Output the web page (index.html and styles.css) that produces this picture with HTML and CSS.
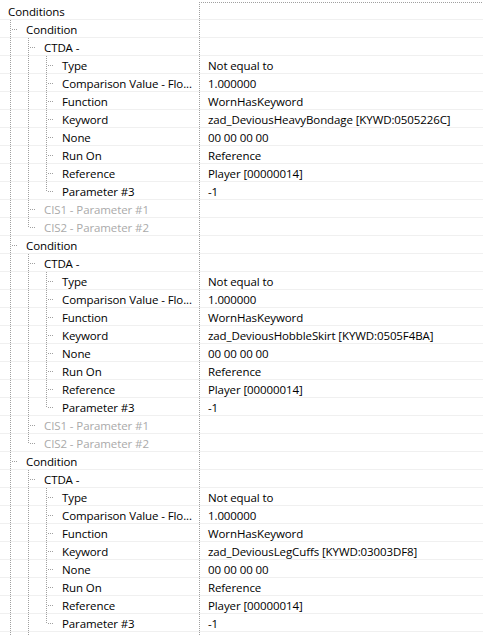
FILE: index.html
```html
<!DOCTYPE html>
<html>
<head>
<meta charset="utf-8">
<link rel="stylesheet" href="styles.css">
</head>
<body>
<div class="tree">
  <div class="row first"><div class="name"><span class="label">Conditions</span></div><div class="val"></div></div>

  <div class="row"><div class="name"><span class="g t"></span><span class="label">Condition</span></div><div class="val"></div></div>
  <div class="row"><div class="name"><span class="g v"></span><span class="g t"></span><span class="label">CTDA -</span></div><div class="val"></div></div>
  <div class="row"><div class="name"><span class="g v"></span><span class="g v"></span><span class="g t"></span><span class="label">Type</span></div><div class="val">Not equal to</div></div>
  <div class="row"><div class="name"><span class="g v"></span><span class="g v"></span><span class="g t"></span><span class="label">Comparison Value - Flo...</span></div><div class="val">1.000000</div></div>
  <div class="row"><div class="name"><span class="g v"></span><span class="g v"></span><span class="g t"></span><span class="label">Function</span></div><div class="val">WornHasKeyword</div></div>
  <div class="row"><div class="name"><span class="g v"></span><span class="g v"></span><span class="g t"></span><span class="label">Keyword</span></div><div class="val">zad_DeviousHeavyBondage [KYWD:0505226C]</div></div>
  <div class="row"><div class="name"><span class="g v"></span><span class="g v"></span><span class="g t"></span><span class="label">None</span></div><div class="val">00 00 00 00</div></div>
  <div class="row"><div class="name"><span class="g v"></span><span class="g v"></span><span class="g t"></span><span class="label">Run On</span></div><div class="val">Reference</div></div>
  <div class="row"><div class="name"><span class="g v"></span><span class="g v"></span><span class="g t"></span><span class="label">Reference</span></div><div class="val">Player [00000014]</div></div>
  <div class="row"><div class="name"><span class="g v"></span><span class="g v"></span><span class="g l"></span><span class="label">Parameter #3</span></div><div class="val">-1</div></div>
  <div class="row dim"><div class="name"><span class="g v"></span><span class="g t"></span><span class="label">CIS1 - Parameter #1</span></div><div class="val"></div></div>
  <div class="row dim"><div class="name"><span class="g v"></span><span class="g l"></span><span class="label">CIS2 - Parameter #2</span></div><div class="val"></div></div>

  <div class="row"><div class="name"><span class="g t"></span><span class="label">Condition</span></div><div class="val"></div></div>
  <div class="row"><div class="name"><span class="g v"></span><span class="g t"></span><span class="label">CTDA -</span></div><div class="val"></div></div>
  <div class="row"><div class="name"><span class="g v"></span><span class="g v"></span><span class="g t"></span><span class="label">Type</span></div><div class="val">Not equal to</div></div>
  <div class="row"><div class="name"><span class="g v"></span><span class="g v"></span><span class="g t"></span><span class="label">Comparison Value - Flo...</span></div><div class="val">1.000000</div></div>
  <div class="row"><div class="name"><span class="g v"></span><span class="g v"></span><span class="g t"></span><span class="label">Function</span></div><div class="val">WornHasKeyword</div></div>
  <div class="row"><div class="name"><span class="g v"></span><span class="g v"></span><span class="g t"></span><span class="label">Keyword</span></div><div class="val">zad_DeviousHobbleSkirt [KYWD:0505F4BA]</div></div>
  <div class="row"><div class="name"><span class="g v"></span><span class="g v"></span><span class="g t"></span><span class="label">None</span></div><div class="val">00 00 00 00</div></div>
  <div class="row"><div class="name"><span class="g v"></span><span class="g v"></span><span class="g t"></span><span class="label">Run On</span></div><div class="val">Reference</div></div>
  <div class="row"><div class="name"><span class="g v"></span><span class="g v"></span><span class="g t"></span><span class="label">Reference</span></div><div class="val">Player [00000014]</div></div>
  <div class="row"><div class="name"><span class="g v"></span><span class="g v"></span><span class="g l"></span><span class="label">Parameter #3</span></div><div class="val">-1</div></div>
  <div class="row dim"><div class="name"><span class="g v"></span><span class="g t"></span><span class="label">CIS1 - Parameter #1</span></div><div class="val"></div></div>
  <div class="row dim"><div class="name"><span class="g v"></span><span class="g l"></span><span class="label">CIS2 - Parameter #2</span></div><div class="val"></div></div>

  <div class="row"><div class="name"><span class="g t"></span><span class="label">Condition</span></div><div class="val"></div></div>
  <div class="row"><div class="name"><span class="g v"></span><span class="g t"></span><span class="label">CTDA -</span></div><div class="val"></div></div>
  <div class="row"><div class="name"><span class="g v"></span><span class="g v"></span><span class="g t"></span><span class="label">Type</span></div><div class="val">Not equal to</div></div>
  <div class="row"><div class="name"><span class="g v"></span><span class="g v"></span><span class="g t"></span><span class="label">Comparison Value - Flo...</span></div><div class="val">1.000000</div></div>
  <div class="row"><div class="name"><span class="g v"></span><span class="g v"></span><span class="g t"></span><span class="label">Function</span></div><div class="val">WornHasKeyword</div></div>
  <div class="row"><div class="name"><span class="g v"></span><span class="g v"></span><span class="g t"></span><span class="label">Keyword</span></div><div class="val">zad_DeviousLegCuffs [KYWD:03003DF8]</div></div>
  <div class="row"><div class="name"><span class="g v"></span><span class="g v"></span><span class="g t"></span><span class="label">None</span></div><div class="val">00 00 00 00</div></div>
  <div class="row"><div class="name"><span class="g v"></span><span class="g v"></span><span class="g t"></span><span class="label">Run On</span></div><div class="val">Reference</div></div>
  <div class="row"><div class="name"><span class="g v"></span><span class="g v"></span><span class="g t"></span><span class="label">Reference</span></div><div class="val">Player [00000014]</div></div>
  <div class="row"><div class="name"><span class="g v"></span><span class="g v"></span><span class="g l"></span><span class="label">Parameter #3</span></div><div class="val">-1</div></div>
  <div class="row"><div class="name"><span class="g v"></span><span class="g v"></span></div><div class="val"></div></div>
</div>
</body>
</html>
```
FILE: styles.css
```css
html, body {
  margin: 0;
  padding: 0;
  background: #fff;
  overflow: hidden;
}
body {
  font-family: "Open Sans", "Noto Sans", sans-serif;
  font-size: 11.5px;
  letter-spacing: -0.1px;
  color: #000;
  width: 483px;
  height: 635px;
}
.tree {
  padding-top: 2px;
}
.row {
  display: grid;
  grid-template-columns: 199px 1fr;
  height: 18px;
  line-height: 20px;
  background: linear-gradient(#f0f0f0, #f0f0f0) left bottom / 100% 1px no-repeat;
}
.name {
  display: flex;
  align-items: stretch;
  white-space: nowrap;
  overflow: hidden;
}
.label {
  padding-left: 8px;
}
.dim .label {
  color: #aaaaaa;
}
.g {
  flex: none;
  width: 18px;
  height: 18px;
}
.g.v {
  background:
    repeating-linear-gradient(to bottom, #a0a0a0 0 1px, transparent 1px 2px) 10px 0 / 1px 18px no-repeat;
}
.g.t {
  background:
    repeating-linear-gradient(to right, #a0a0a0 0 1px, transparent 1px 2px) 12px 9px / 6px 1px no-repeat,
    repeating-linear-gradient(to bottom, #a0a0a0 0 1px, transparent 1px 2px) 10px 0 / 1px 18px no-repeat;
}
.g.l {
  background:
    repeating-linear-gradient(to right, #a0a0a0 0 1px, transparent 1px 2px) 12px 9px / 6px 1px no-repeat,
    repeating-linear-gradient(to bottom, #a0a0a0 0 1px, transparent 1px 2px) 10px 0 / 1px 10px no-repeat;
}
.val {
  padding-left: 9px;
  white-space: nowrap;
  overflow: hidden;
  background:
    repeating-linear-gradient(to bottom, #a0a0a0 0 1px, transparent 1px 2px) 0 0 / 1px 18px no-repeat;
}
.first .val {
  background:
    repeating-linear-gradient(to right, #a0a0a0 0 1px, transparent 1px 2px) 0 0 / 100% 1px no-repeat,
    repeating-linear-gradient(to bottom, #a0a0a0 0 1px, transparent 1px 2px) 0 0 / 1px 18px no-repeat;
}
```
